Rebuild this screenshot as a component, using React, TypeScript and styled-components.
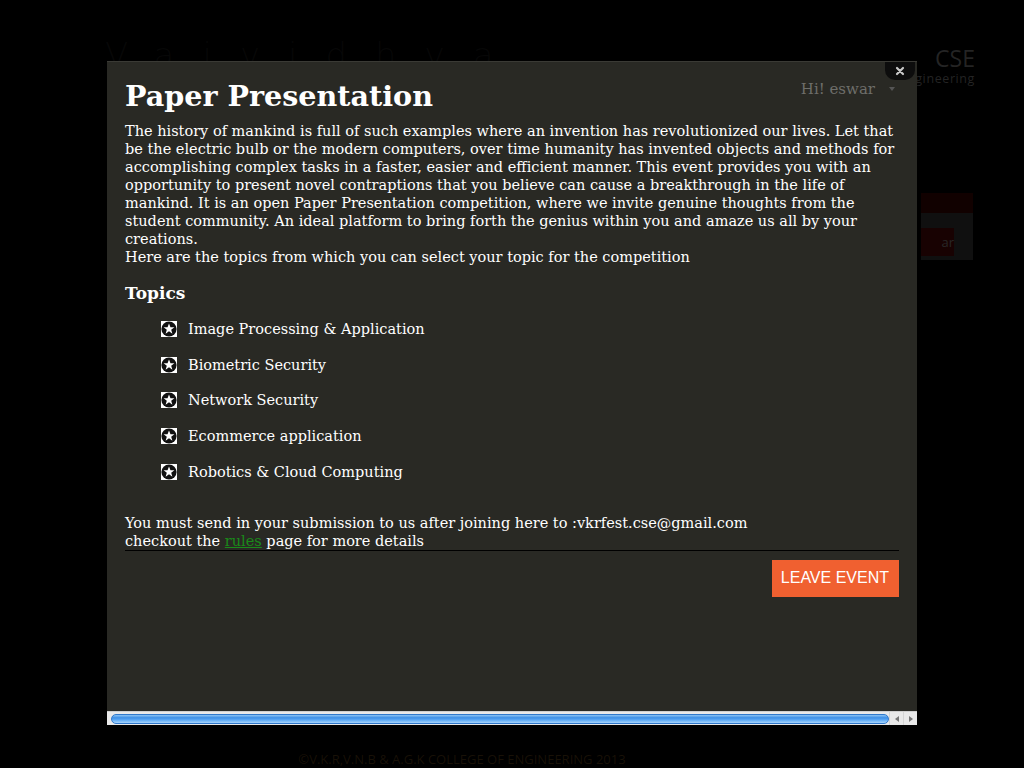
import React from "react";
import styled, { createGlobalStyle } from "styled-components";

const GlobalStyle = createGlobalStyle`
  html, body {
    margin: 0;
    padding: 0;
    background: #000;
    height: 100%;
    overflow: hidden;
  }
  #root {
    height: 100%;
  }
`;

const Page = styled.div`
  position: relative;
  width: 1024px;
  height: 768px;
  background: #000;
  font-family: "DejaVu Serif", serif;
  overflow: hidden;
`;

/* dimmed site behind the overlay */
const Backdrop = styled.div`
  display: flex;
  flex-direction: column;
  height: 100%;
  padding: 0 49px 0 105px;
  box-sizing: border-box;
`;

const Header = styled.div`
  display: flex;
  justify-content: space-between;
  align-items: flex-start;
  padding-top: 40px;
  height: 150px;
  box-sizing: border-box;
`;

const SiteLogo = styled.div`
  font-family: "DejaVu Sans", sans-serif;
  font-weight: 200;
  font-size: 34px;
  letter-spacing: 28px;
  color: #080808;
  line-height: 30px;
`;

const Dept = styled.div`
  text-align: right;
  font-family: "Open Sans", sans-serif;
  color: #262626;
  margin-top: 7px;
`;

const DeptTitle = styled.div`
  font-size: 23px;
  line-height: 22px;
`;

const DeptSub = styled.div`
  font-size: 12.5px;
  line-height: 13px;
  margin-top: 3px;
  letter-spacing: 0.6px;
`;

const SideWidget = styled.div`
  align-self: flex-end;
  width: 52px;
  margin-top: 43px;
  margin-right: 2px;
  background: #111;
`;

const WidgetHead = styled.div`
  height: 20px;
  background: #120200;
`;

const WidgetBody = styled.div`
  height: 47px;
  padding-top: 15px;
  box-sizing: border-box;
`;

const WidgetButton = styled.div`
  width: 33px;
  height: 28px;
  background: #1a0303;
  color: #2a2a2a;
  font-family: "Open Sans", sans-serif;
  font-size: 13px;
  line-height: 28px;
  text-align: right;
`;

const Footer = styled.div`
  margin-top: auto;
  padding-bottom: 1px;
  margin-left: -105px;
  margin-right: -49px;
  text-align: center;
  font-family: "Open Sans", sans-serif;
  font-size: 13px;
  color: #1a1208;
  transform: translateX(-50px);
  line-height: 16px;
`;

const Overlay = styled.div`
  position: absolute;
  inset: 0;
  background: rgba(0, 0, 0, 0.05);
`;

const Modal = styled.div`
  position: absolute;
  left: 107px;
  top: 61px;
  width: 810px;
  height: 664px;
  background: #292924;
  display: flex;
  flex-direction: column;
  border-top: 1px solid #3a3a35;
  box-sizing: border-box;
`;

const ModalBody = styled.div`
  flex: 1;
  padding: 16px 18px 0 18px;
  color: #fff;
  position: relative;
`;

const CloseTab = styled.button`
  position: absolute;
  top: 0;
  right: 2px;
  width: 30px;
  height: 18px;
  padding: 0;
  border: none;
  background: #0d0d0d;
  border-radius: 0 0 10px 10px;
  display: flex;
  align-items: center;
  justify-content: center;
  cursor: pointer;
`;

const UserMenu = styled.div`
  position: absolute;
  top: 18px;
  right: 22px;
  display: flex;
  align-items: center;
  gap: 14px;
  color: #6e6e6a;
  font-size: 15px;
`;

const Caret = styled.span`
  width: 0;
  height: 0;
  border-left: 3px solid transparent;
  border-right: 3px solid transparent;
  border-top: 4px solid #555;
`;

const Title = styled.h1`
  margin: 0 0 8px 0;
  font-size: 28.6px;
  font-weight: bold;
  line-height: 36px;
`;

const Text = styled.p`
  margin: 0;
  font-size: 14.5px;
  line-height: 18px;
`;

const TopicsHeading = styled.h3`
  margin: 17px 0 8px 0;
  font-size: 17px;
  font-weight: bold;
  line-height: 20px;
`;

const TopicList = styled.ul`
  list-style: none;
  margin: 0 0 24px 0;
  padding: 0 0 0 36px;
`;

const Topic = styled.li`
  display: flex;
  align-items: center;
  gap: 11px;
  height: 35.8px;
  font-size: 14.5px;
`;

const StarBadge = styled.span`
  width: 16px;
  height: 16px;
  background: #fff;
  display: flex;
  align-items: center;
  justify-content: center;
  flex: none;
`;

const RulesLink = styled.a`
  color: #1a8a1a;
  text-decoration: underline;
`;

const Divider = styled.hr`
  margin: 0;
  border: none;
  border-top: 1px solid #000;
`;

const Actions = styled.div`
  display: flex;
  justify-content: flex-end;
  padding-top: 9px;
`;

const LeaveButton = styled.button`
  background: #f06030;
  color: #fff;
  border: none;
  height: 37px;
  padding: 0 10px 0 9px;
  font-family: "Liberation Sans", Arial, sans-serif;
  font-size: 16px;
  cursor: pointer;
`;

const ScrollBar = styled.div`
  height: 13px;
  background: #e9e9e9;
  border-top: 1px solid #cfcfcf;
  display: flex;
  align-items: center;
  padding-left: 4px;
`;

const Thumb = styled.div`
  flex: 1;
  height: 10px;
  border-radius: 5px;
  background: linear-gradient(
    to bottom,
    #8cc4f5 0%,
    #3d8fe6 35%,
    #5aa8f5 60%,
    #a8d6ff 100%
  );
  border: 1px solid #2f78cc;
  box-sizing: border-box;
`;

const Arrow = styled.div`
  width: 13px;
  height: 13px;
  display: flex;
  align-items: center;
  justify-content: center;
  border-left: 1px solid #d4d4d4;
`;

const topics = [
  "Image Processing & Application",
  "Biometric Security",
  "Network Security",
  "Ecommerce application",
  "Robotics & Cloud Computing",
];

const Star = () => (
  <svg width="16" height="16" viewBox="0 0 16 16">
    <circle cx="8" cy="8" r="7.6" fill="#111" />
    <polygon
      points="8,2.4 9.5,6.3 13.4,6.3 10.2,8.7 11.4,12.7 8,10.3 4.6,12.7 5.8,8.7 2.6,6.3 6.5,6.3"
      fill="#fff"
    />
  </svg>
);

export default function App() {
  return (
    <Page>
      <GlobalStyle />
      <Backdrop>
        <Header>
          <SiteLogo>Vaividhya</SiteLogo>
          <Dept>
            <DeptTitle>CSE</DeptTitle>
            <DeptSub>Engineering</DeptSub>
          </Dept>
        </Header>
        <SideWidget>
          <WidgetHead />
          <WidgetBody>
            <WidgetButton>ar</WidgetButton>
          </WidgetBody>
        </SideWidget>
        <Footer>©V.K.R,V.N.B &amp; A.G.K COLLEGE OF ENGINEERING 2013</Footer>
      </Backdrop>
      <Overlay />
      <Modal>
        <ModalBody>
          <CloseTab aria-label="close">
            <svg width="10" height="10" viewBox="0 0 10 10">
              <path d="M2 2 L8 8 M8 2 L2 8" stroke="#c8c8c8" strokeWidth="2.2" strokeLinecap="round" />
            </svg>
          </CloseTab>
          <UserMenu>
            Hi! eswar
            <Caret />
          </UserMenu>
          <Title>Paper Presentation</Title>
          <Text>
            The history of mankind is full of such examples where an invention has revolutionized our
            lives. Let that be the electric bulb or the modern computers, over time humanity has invented
            objects and methods for accomplishing complex tasks in a faster, easier and efficient manner.
            This event provides you with an opportunity to present novel contraptions that you believe can
            cause a breakthrough in the life of mankind. It is an open Paper Presentation competition, where
            we invite genuine thoughts from the student community. An ideal platform to bring forth the
            genius within you and amaze us all by your creations.
            <br />
            Here are the topics from which you can select your topic for the competition
          </Text>
          <TopicsHeading>Topics</TopicsHeading>
          <TopicList>
            {topics.map((t) => (
              <Topic key={t}>
                <StarBadge>
                  <Star />
                </StarBadge>
                {t}
              </Topic>
            ))}
          </TopicList>
          <Text>
            You must send in your submission to us after joining here to :vkrfest.cse@gmail.com
            <br />
            checkout the <RulesLink href="#">rules</RulesLink> page for more details
          </Text>
          <Divider />
          <Actions>
            <LeaveButton>LEAVE EVENT</LeaveButton>
          </Actions>
        </ModalBody>
        <ScrollBar>
          <Thumb />
          <Arrow>
            <svg width="6" height="6" viewBox="0 0 6 6">
              <polygon points="5,0 5,6 1,3" fill="#777" />
            </svg>
          </Arrow>
          <Arrow>
            <svg width="6" height="6" viewBox="0 0 6 6">
              <polygon points="1,0 1,6 5,3" fill="#777" />
            </svg>
          </Arrow>
        </ScrollBar>
      </Modal>
    </Page>
  );
}
